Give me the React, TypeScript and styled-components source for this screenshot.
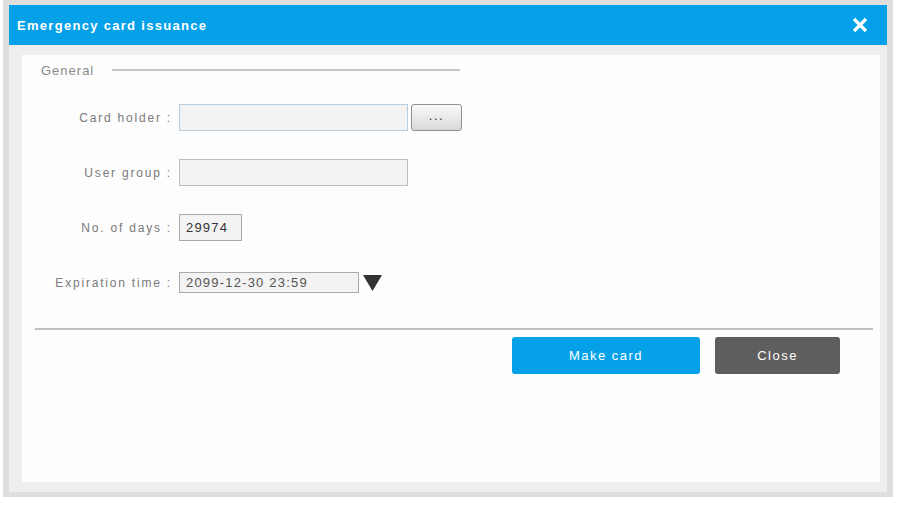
import styled, { createGlobalStyle } from "styled-components";

const GlobalStyle = createGlobalStyle`
  body {
    margin: 0;
    background: #ffffff;
    font-family: "Liberation Sans", Arial, sans-serif;
  }
`;

const Frame = styled.div`
  width: 878px;
  margin-left: 3px;
  padding: 5px 6px;
  background: #dedede;
`;

const TitleBar = styled.header`
  height: 40px;
  padding: 0 15px 0 8px;
  display: flex;
  align-items: center;
  justify-content: space-between;
  background: #04a1e9;
  color: #ffffff;
`;

const Title = styled.h1`
  margin: 0;
  font-size: 13px;
  font-weight: bold;
  letter-spacing: 1.3px;
`;

const CloseIcon = styled.button`
  width: 24px;
  height: 24px;
  padding: 0;
  border: 0;
  background: transparent;
  display: flex;
  align-items: center;
  justify-content: center;
  cursor: pointer;
`;

const Body = styled.div`
  padding: 10px 7px 10px 13px;
  background: #eeeeee;
`;

const Panel = styled.section`
  height: 427px;
  background: #fdfdfd;
  display: flex;
  flex-direction: column;
`;

const Legend = styled.div`
  height: 30px;
  padding-left: 19px;
  display: flex;
  align-items: center;
  gap: 18px;
  color: #8a8a8a;
  font-size: 13px;
  letter-spacing: 1px;

  > .rule {
    width: 348px;
    height: 2px;
    background: #c6c6c6;
  }
`;

const Form = styled.div`
  margin-top: 19px;
  display: grid;
  grid-template-columns: 150px auto;
  grid-auto-rows: 27px;
  row-gap: 28px;
  column-gap: 7px;
  align-items: center;
`;

const Label = styled.label`
  text-align: right;
  color: #7a7a7a;
  font-size: 12px;
  letter-spacing: 1.8px;
  white-space: nowrap;
`;

const Cell = styled.div`
  display: flex;
  align-items: center;
  gap: 3px;
`;

const Field = styled.div<{ $width: number; $height?: number; $border?: string; $color?: string }>`
  box-sizing: border-box;
  width: ${(p) => p.$width}px;
  height: ${(p) => p.$height ?? 27}px;
  padding: 0 6px;
  display: flex;
  align-items: center;
  background: #f3f3f3;
  border: 1px solid ${(p) => p.$border ?? "#bdbdbd"};
  color: ${(p) => p.$color ?? "#333333"};
  font-size: 13px;
  letter-spacing: 1.2px;
`;

const BrowseButton = styled.button`
  box-sizing: border-box;
  width: 51px;
  height: 27px;
  padding: 0 0 4px;
  border: 1px solid #8f8f8f;
  border-radius: 3px;
  background: linear-gradient(#fafafa, #d9d9d9);
  color: #333333;
  font-size: 13px;
  letter-spacing: 1.5px;
  font-family: inherit;
`;

const Separator = styled.hr`
  margin: 32px 7px 0 13px;
  height: 2px;
  border: 0;
  background: #c0c0c0;
`;

const Actions = styled.div`
  margin-top: 7px;
  padding-right: 40px;
  display: flex;
  justify-content: flex-end;
  gap: 15px;
`;

const ActionButton = styled.button<{ $primary?: boolean; $width: number }>`
  width: ${(p) => p.$width}px;
  height: 37px;
  border: 0;
  border-radius: 3px;
  background: ${(p) => (p.$primary ? "#04a1e9" : "#5e5e5e")};
  color: #ffffff;
  font-family: inherit;
  font-size: 13px;
  letter-spacing: 1.5px;
`;

const App = () => {
  return (
    <>
      <GlobalStyle />
      <Frame>
        <TitleBar>
          <Title>Emergency card issuance</Title>
          <CloseIcon aria-label="Close">
            <svg width="16" height="16" viewBox="0 0 16 16">
              <path d="M2 2 L14 14 M14 2 L2 14" stroke="#ffffff" strokeWidth="3.2" />
            </svg>
          </CloseIcon>
        </TitleBar>
        <Body>
          <Panel>
            <Legend>
              <span>General</span>
              <div className="rule" />
            </Legend>
            <Form>
              <Label>Card holder :</Label>
              <Cell>
                <Field $width={229} $border="#b9cddd" />
                <BrowseButton>...</BrowseButton>
              </Cell>

              <Label>User group :</Label>
              <Cell>
                <Field $width={229} />
              </Cell>

              <Label>No. of days :</Label>
              <Cell>
                <Field $width={63} $border="#aaaaaa">29974</Field>
              </Cell>

              <Label>Expiration time :</Label>
              <Cell>
                <Field $width={180} $height={21} $border="#aaaaaa" $color="#555555">
                  2099-12-30 23:59
                </Field>
                <svg width="22" height="18" viewBox="0 0 22 18">
                  <polygon points="1,1 20,1 10.5,17" fill="#333333" />
                </svg>
              </Cell>
            </Form>
            <Separator />
            <Actions>
              <ActionButton $primary $width={188}>Make card</ActionButton>
              <ActionButton $width={125}>Close</ActionButton>
            </Actions>
          </Panel>
        </Body>
      </Frame>
    </>
  );
};

export default App;
